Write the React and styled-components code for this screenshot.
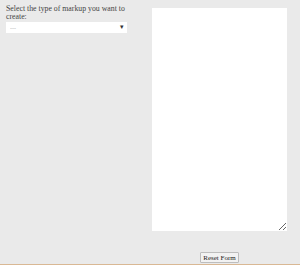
import React, { useState } from 'react';
import styled, { createGlobalStyle } from 'styled-components';

const Global = createGlobalStyle`
  html, body {
    margin: 0;
    padding: 0;
    background: #eaeaea;
  }
  body {
    font-family: "Liberation Serif", "Times New Roman", serif;
  }
`;

const App = () => {
  const [markup, setMarkup] = useState('');
  const [text, setText] = useState('');

  return (
    <Page>
      <Global />
      <Columns>
        <LeftCol>
          <Label htmlFor="markup-type">Select the type of markup you want to create:</Label>
          <SelectBox>
            <MarkupSelect id="markup-type" value={markup} onChange={(e) => setMarkup(e.target.value)}>
              <option value="">---</option>
              <option value="html">HTML</option>
              <option value="markdown">Markdown</option>
            </MarkupSelect>
            <Arrow>▾</Arrow>
          </SelectBox>
        </LeftCol>
        <RightCol>
          <Output value={text} onChange={(e) => setText(e.target.value)} />
          <ResetBtn onClick={() => { setText(''); setMarkup(''); }}>Reset Form</ResetBtn>
        </RightCol>
      </Columns>
      <BottomLine />
    </Page>
  );
};

export default App;

const Page = styled.div`
  width: 300px;
  height: 265px;
  display: flex;
  flex-direction: column;
`;

const Columns = styled.div`
  flex: 1;
  display: flex;
  padding: 8px 0 0 6px;
`;

const LeftCol = styled.div`
  width: 121px;
  display: flex;
  flex-direction: column;
`;

const Label = styled.label`
  font-size: 7.8px;
  line-height: 8px;
  color: #444;
  margin: -3px 0 1px 0;
`;

const SelectBox = styled.div`
  position: relative;
  height: 11px;
  background: #fff;
`;

const MarkupSelect = styled.select`
  appearance: none;
  display: block;
  box-sizing: border-box;
  width: 100%;
  height: 11px;
  margin: 0;
  border: none;
  background: transparent;
  font-family: "Liberation Sans", Arial, sans-serif;
  font-size: 6px;
  line-height: normal;
  color: #a8a8a8;
  padding: 0 4px;
  outline: none;
`;

const Arrow = styled.span`
  position: absolute;
  right: 3px;
  top: 0;
  font-size: 7px;
  line-height: 11px;
  color: #333;
  pointer-events: none;
`;

const RightCol = styled.div`
  margin-left: 25px;
  width: 135px;
  display: flex;
  flex-direction: column;
  align-items: center;
`;

const Output = styled.textarea`
  width: 135px;
  height: 223px;
  box-sizing: border-box;
  border: none;
  background: #fff;
  padding: 0;
  outline: none;
`;

const ResetBtn = styled.button`
  margin-top: 21px;
  height: 11px;
  width: 39px;
  padding: 0;
  font-family: "Liberation Serif", "Times New Roman", serif;
  font-size: 7px;
  line-height: 8px;
  color: #222;
  background: #f2f2f2;
  border: 1px solid #bdbdbd;
  border-radius: 1px;
`;

const BottomLine = styled.div`
  height: 1px;
  background: #d9b894;
`;
